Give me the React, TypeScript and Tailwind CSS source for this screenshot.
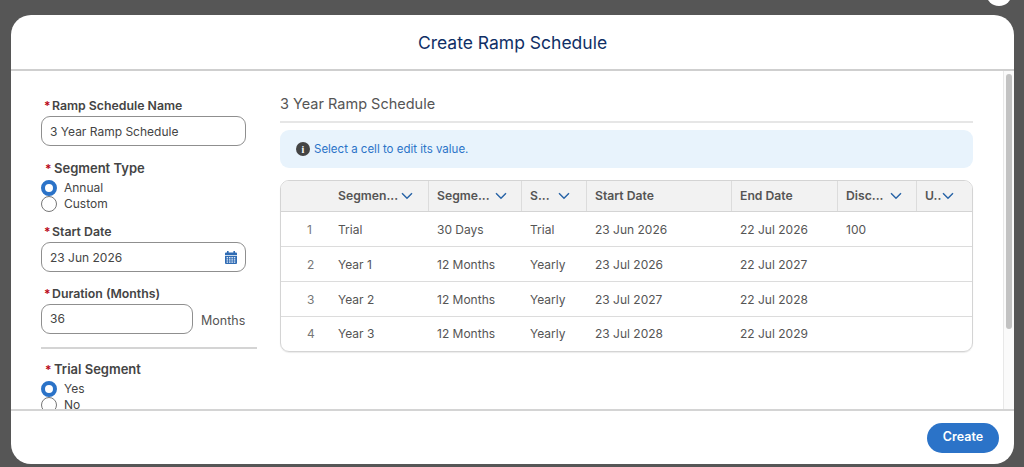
import React from "react";

const Req = ({ children, wide }: { children: React.ReactNode; wide?: boolean }) => (
  <div className={`flex items-baseline font-semibold text-[#444] leading-[16px] ${wide ? "text-[13px] ml-[4px]" : "text-[12.3px] ml-[3px]"}`}>
    <span className="text-[#ba0517] w-[8px] shrink-0 text-[12px]">*</span>
    <span className={wide ? "ml-[1px]" : ""}>{children}</span>
  </div>
);

const Radio = ({ label, on }: { label: string; on?: boolean }) => (
  <div className="flex items-center h-[16px] text-[12px] text-[#444]">
    {on ? (
      <span className="w-[16px] h-[16px] rounded-full border-[4px] border-[#2b73c8] bg-white shrink-0" />
    ) : (
      <span className="w-[16px] h-[16px] rounded-full border border-[#777] bg-white shrink-0" />
    )}
    <span className="ml-[7px]">{label}</span>
  </div>
);

const Chevron = () => (
  <svg width="12" height="8" viewBox="0 0 12 8" className="shrink-0">
    <path d="M1 1.2 L6 6.2 L11 1.2" fill="none" stroke="#2b66a8" strokeWidth="1.5" />
  </svg>
);

const CalIcon = () => (
  <svg width="12" height="13" viewBox="0 0 12 13" className="shrink-0">
    <rect x="2" y="0" width="1.6" height="3" fill="#2f6bb3" />
    <rect x="8.4" y="0" width="1.6" height="3" fill="#2f6bb3" />
    <path d="M1 1.5h10a1 1 0 0 1 1 1V4H0V2.5a1 1 0 0 1 1-1z" fill="#2f6bb3" />
    <path d="M0 4.8h12V12a1 1 0 0 1-1 1H1a1 1 0 0 1-1-1z" fill="#2f6bb3" />
    {[1.6, 4, 6.4, 8.8].map((x) =>
      [6, 8.2, 10.4].map((y) => <rect key={`${x}-${y}`} x={x} y={y} width="1.5" height="1.4" fill="#dbe7f5" />)
    )}
  </svg>
);

const rows = [
  ["1", "Trial", "30 Days", "Trial", "23 Jun 2026", "22 Jul 2026", "100"],
  ["2", "Year 1", "12 Months", "Yearly", "23 Jul 2026", "22 Jul 2027", ""],
  ["3", "Year 2", "12 Months", "Yearly", "23 Jul 2027", "22 Jul 2028", ""],
  ["4", "Year 3", "12 Months", "Yearly", "23 Jul 2028", "22 Jul 2029", ""],
];

const gridCols = "grid grid-cols-[148px_93px_65px_145px_106px_79px_1fr]";

const HeadCell = ({ text, chevron, first, gap }: { text: string; chevron?: boolean; first?: boolean; gap?: string }) => (
  <div className={`flex items-center h-full border-r border-[#dcdcdc] last:border-r-0 ${first ? "pl-[57px]" : "pl-[8px]"}`}>
    <span className="whitespace-nowrap">{text}</span>
    {chevron && <span className={gap ?? "ml-[4px]"}><Chevron /></span>}
  </div>
);

export default function App() {
  return (
    <div className="relative w-[1024px] h-[467px] overflow-hidden bg-[#565656] font-['Inter',sans-serif] antialiased">
      <div className="absolute right-[12px] top-[-20px] w-[26px] h-[26px] rounded-full bg-white" />
      <div className="pt-[15px] pl-[11px]">
        <div className="w-[1003px] h-[449px] bg-white rounded-[20px] overflow-hidden flex flex-col">
          <header className="h-[54px] shrink-0 flex items-center justify-center border-b-2 border-[#cfcfcf] text-[17.5px] text-[#0f2f66] box-content">
            <span className="pt-[2px]">Create Ramp Schedule</span>
          </header>
          <div className="h-[338px] shrink-0 flex overflow-hidden">
            <div className="w-[992px] shrink-0 flex pl-[30px] pt-[27px]">
              <div className="w-[216px] shrink-0">
                <Req>Ramp Schedule Name</Req>
                <div className="mt-[2px] w-[205px] h-[30px] rounded-[9px] border border-[#8f8f8f] flex items-center pl-[8px] pt-[1px] text-[12px] text-[#444]">
                  3 Year Ramp Schedule
                </div>
                <div className="mt-[14px]"><Req wide>Segment Type</Req></div>
                <div className="mt-[3px]">
                  <Radio label="Annual" on />
                  <Radio label="Custom" />
                </div>
                <div className="mt-[12px]"><Req>Start Date</Req></div>
                <div className="mt-[2px] w-[205px] h-[30px] rounded-[9px] border border-[#8f8f8f] flex items-center justify-between pl-[8px] pr-[8px] pt-[1px] text-[12px] text-[#444]">
                  <span>23 Jun 2026</span>
                  <CalIcon />
                </div>
                <div className="mt-[14px]"><Req>Duration (Months)</Req></div>
                <div className="mt-[2px] flex items-center">
                  <div className="w-[152px] h-[30px] rounded-[9px] border border-[#8f8f8f] flex items-center pl-[8px] text-[12px] text-[#444]">36</div>
                  <span className="ml-[8px] mt-[5px] text-[12.5px] text-[#555]">Months</span>
                </div>
                <div className="mt-[13px] h-[2px] bg-[#d4d4d4]" />
                <div className="mt-[12px]"><Req wide>Trial Segment</Req></div>
                <div className="mt-[3px]">
                  <Radio label="Yes" on />
                  <Radio label="No" />
                </div>
              </div>
              <div className="w-[693px] ml-[23px] shrink-0 -mt-[3px]">
                <div className="h-[26px] border-b-2 border-[#e6e6e6] box-content text-[14.5px] text-[#555] leading-[18px]">3 Year Ramp Schedule</div>
                <div className="mt-[7px] h-[38px] rounded-[9px] bg-[#e8f3fc] flex items-center pl-[16px] text-[11.5px] text-[#2b73c8]">
                  <span className="w-[14px] h-[14px] rounded-full bg-[#444] text-white text-[10px] font-bold flex items-center justify-center font-['Liberation_Serif',serif] mr-[4px]">i</span>
                  <span className="pt-[2px]">Select a cell to edit its value.</span>
                </div>
                <div className="mt-[12px] rounded-[9px] border border-[#d4d4d4] overflow-hidden text-[12px] text-[#555] shadow-[0_1px_1px_rgba(0,0,0,0.08)]">
                  <div className={`${gridCols} h-[31px] bg-[#f2f2f2] font-semibold border-b border-[#d4d4d4] text-[12.2px]`}>
                    <HeadCell text="Segmen..." chevron first gap="ml-[3px]" />
                    <HeadCell text="Segme..." chevron gap="ml-[5px]" />
                    <HeadCell text="S..." chevron gap="ml-[8px]" />
                    <HeadCell text="Start Date" />
                    <HeadCell text="End Date" />
                    <HeadCell text="Disc..." chevron gap="ml-[7px]" />
                    <HeadCell text="U.." chevron gap="ml-[1px]" />
                  </div>
                  {rows.map((r, i) => (
                    <div key={r[0]} className={`${gridCols} items-center ${i < 3 ? "h-[35px] border-b border-[#dcdcdc] pt-[1px]" : "h-[34px]"}`}>
                      <div className="flex items-center">
                        <span className="w-[57px] pl-[26px] text-[#777]">{r[0]}</span>
                        <span>{r[1]}</span>
                      </div>
                      <div className="pl-[8px]">{r[2]}</div>
                      <div className="pl-[8px]">{r[3]}</div>
                      <div className="pl-[8px]">{r[4]}</div>
                      <div className="pl-[8px]">{r[5]}</div>
                      <div className="pl-[8px]">{r[6]}</div>
                      <div />
                    </div>
                  ))}
                </div>
              </div>
            </div>
            <div className="w-[11px] shrink-0 border-l border-[#e8e8e8] bg-[#fafafa] pt-[3px] pl-[2px]">
              <div className="w-[6px] h-[255px] rounded-full bg-[#c2c2c2]" />
            </div>
          </div>
          <footer className="flex-1 border-t-2 border-[#d4d4d4] flex items-center justify-end pr-[15px]">
            <button className="w-[72px] h-[30px] rounded-full bg-[#2b73c8] text-white text-[12.5px] font-semibold">Create</button>
          </footer>
        </div>
      </div>
    </div>
  );
}
